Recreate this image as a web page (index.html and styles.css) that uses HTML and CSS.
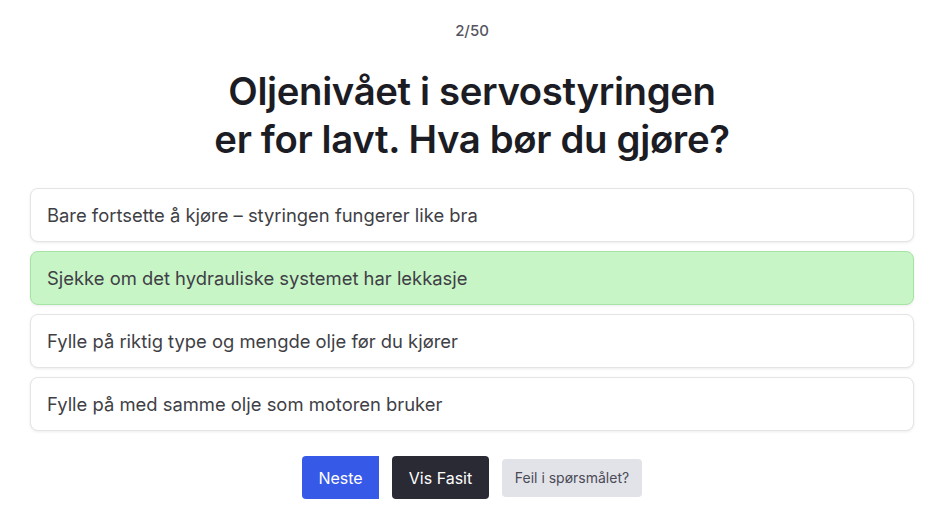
FILE: index.html
```html
<!DOCTYPE html>
<html lang="no">
<head>
<meta charset="utf-8">
<title>Quiz</title>
<link rel="stylesheet" href="styles.css">
</head>
<body>
<main class="quiz">
  <div class="counter">2/50</div>
  <h1 class="question">Oljenivået i servostyringen<br>er for lavt. Hva bør du gjøre?</h1>
  <ul class="options">
    <li class="option">Bare fortsette å kjøre – styringen fungerer like bra</li>
    <li class="option option--correct">Sjekke om det hydrauliske systemet har lekkasje</li>
    <li class="option">Fylle på riktig type og mengde olje før du kjører</li>
    <li class="option">Fylle på med samme olje som motoren bruker</li>
  </ul>
  <div class="actions">
    <button class="btn btn--primary">Neste</button>
    <button class="btn btn--dark">Vis Fasit</button>
    <button class="btn btn--report">Feil i spørsmålet?</button>
  </div>
</main>
</body>
</html>
```
FILE: styles.css
```css
* { box-sizing: border-box; }
html, body { margin: 0; padding: 0; background: #fff; }
body { font-family: Inter, "Noto Sans", sans-serif; color: #1c1c24; }
.quiz {
  padding: 20px 34px 0 30px;
  display: flex;
  flex-direction: column;
  align-items: stretch;
}
.counter {
  text-align: center;
  font-size: 15px;
  font-weight: 500;
  color: #55555f;
  line-height: 22px;
}
.question {
  margin: 25px 0 25px;
  text-align: center;
  font-size: 38.3px;
  font-weight: 600;
  line-height: 48px;
  letter-spacing: -0.35px;
  color: #1c1c24;
}
.options {
  list-style: none;
  margin: 0;
  padding: 0;
  display: flex;
  flex-direction: column;
  gap: 9px;
}
.option {
  height: 54px;
  display: flex;
  align-items: center;
  padding: 0 16px;
  border: 1px solid #e4e4e7;
  border-radius: 8px;
  background: #fff;
  box-shadow: 0 1px 3px rgba(0,0,0,0.08);
  font-size: 18.4px;
  color: #3f3f46;
}
.option--correct {
  background: #c8f5c6;
  border-color: #a6e3a4;
}
.actions {
  display: flex;
  justify-content: center;
  align-items: center;
  gap: 13px;
  margin-top: 25px;
}
.btn {
  font-family: inherit;
  border: none;
  cursor: pointer;
}
.btn--primary {
  height: 43px;
  width: 77px;
  background: #3659e8;
  color: #fff;
  font-size: 16px;
  border-radius: 4px 0 0 4px;
}
.btn--dark {
  height: 43px;
  width: 97px;
  background: #2a2a35;
  color: #fff;
  font-size: 16px;
  border-radius: 4px;
}
.btn--report {
  height: 38px;
  width: 140px;
  background: #e2e3e8;
  color: #4b4b57;
  font-size: 14px;
  border-radius: 4px;
}
```
